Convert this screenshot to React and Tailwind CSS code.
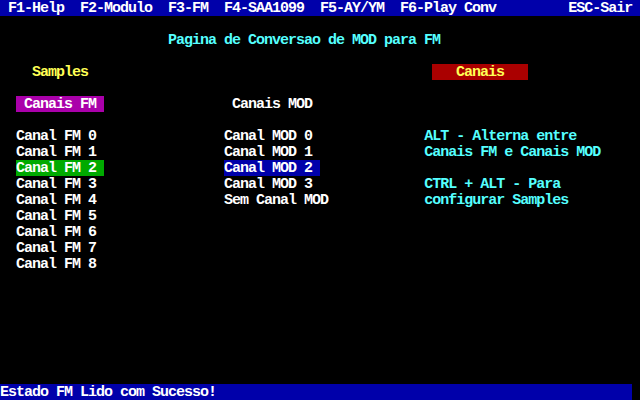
import React from "react";

function Row({ segs = [], className = "" }) {
  // segs: [col, text, classes, isBox]
  const out = [];
  let pos = 0;
  segs.forEach(([col, text, cls, box], i) => {
    if (col > pos) {
      out.push(<span key={"p" + i}>{" ".repeat(col - pos)}</span>);
      pos = col;
    }
    out.push(
      <span
        key={"s" + i}
        className={
          box ? "inline-block align-top h-4 -mt-px pt-px leading-[15px] " + cls : cls
        }
      >
        {text}
      </span>
    );
    pos += text.length;
  });
  return (
    <div className={"h-4 pt-px leading-[15px] whitespace-pre " + className}>{out}</div>
  );
}

const W = "text-white";
const C = "text-[#55FFFF]";

export default function App() {
  return (
    <div
      className="w-[640px] h-[400px] bg-black text-white overflow-hidden text-[15px] tracking-[-1px] font-bold"
      style={{ fontFamily: '"Liberation Mono", "DejaVu Sans Mono", monospace' }}
    >
      <Row
        className="bg-[#0000AA] w-[640px]"
        segs={[
          [1, "F1-Help  F2-Modulo  F3-FM  F4-SAA1099  F5-AY/YM  F6-Play Conv", W],
          [71, "ESC-Sair", W],
        ]}
      />
      <Row />
      <Row segs={[[21, "Pagina de Conversao de MOD para FM", C]]} />
      <Row />
      <Row
        segs={[
          [4, "Samples", "text-[#FFFF55]"],
          [54, "   Canais   ", "bg-[#AA0000] text-[#FFFF55]", true],
        ]}
      />
      <Row />
      <Row
        segs={[
          [2, " Canais FM ", "bg-[#AA00AA] text-white", true],
          [29, "Canais MOD", W],
        ]}
      />
      <Row />
      <Row segs={[[2, "Canal FM 0", W], [28, "Canal MOD 0", W], [53, "ALT - Alterna entre", C]]} />
      <Row segs={[[2, "Canal FM 1", W], [28, "Canal MOD 1", W], [53, "Canais FM e Canais MOD", C]]} />
      <Row
        segs={[
          [2, "Canal FM 2 ", "bg-[#00AA00] text-white", true],
          [28, "Canal MOD 2 ", "bg-[#0000AA] text-white", true],
        ]}
      />
      <Row segs={[[2, "Canal FM 3", W], [28, "Canal MOD 3", W], [53, "CTRL + ALT - Para", C]]} />
      <Row segs={[[2, "Canal FM 4", W], [28, "Sem Canal MOD", W], [53, "configurar Samples", C]]} />
      <Row segs={[[2, "Canal FM 5", W]]} />
      <Row segs={[[2, "Canal FM 6", W]]} />
      <Row segs={[[2, "Canal FM 7", W]]} />
      <Row segs={[[2, "Canal FM 8", W]]} />
      <Row />
      <Row />
      <Row />
      <Row />
      <Row />
      <Row />
      <Row />
      <Row className="bg-[#0000AA] w-[632px]" segs={[[0, "Estado FM Lido com Sucesso!", W]]} />
    </div>
  );
}
